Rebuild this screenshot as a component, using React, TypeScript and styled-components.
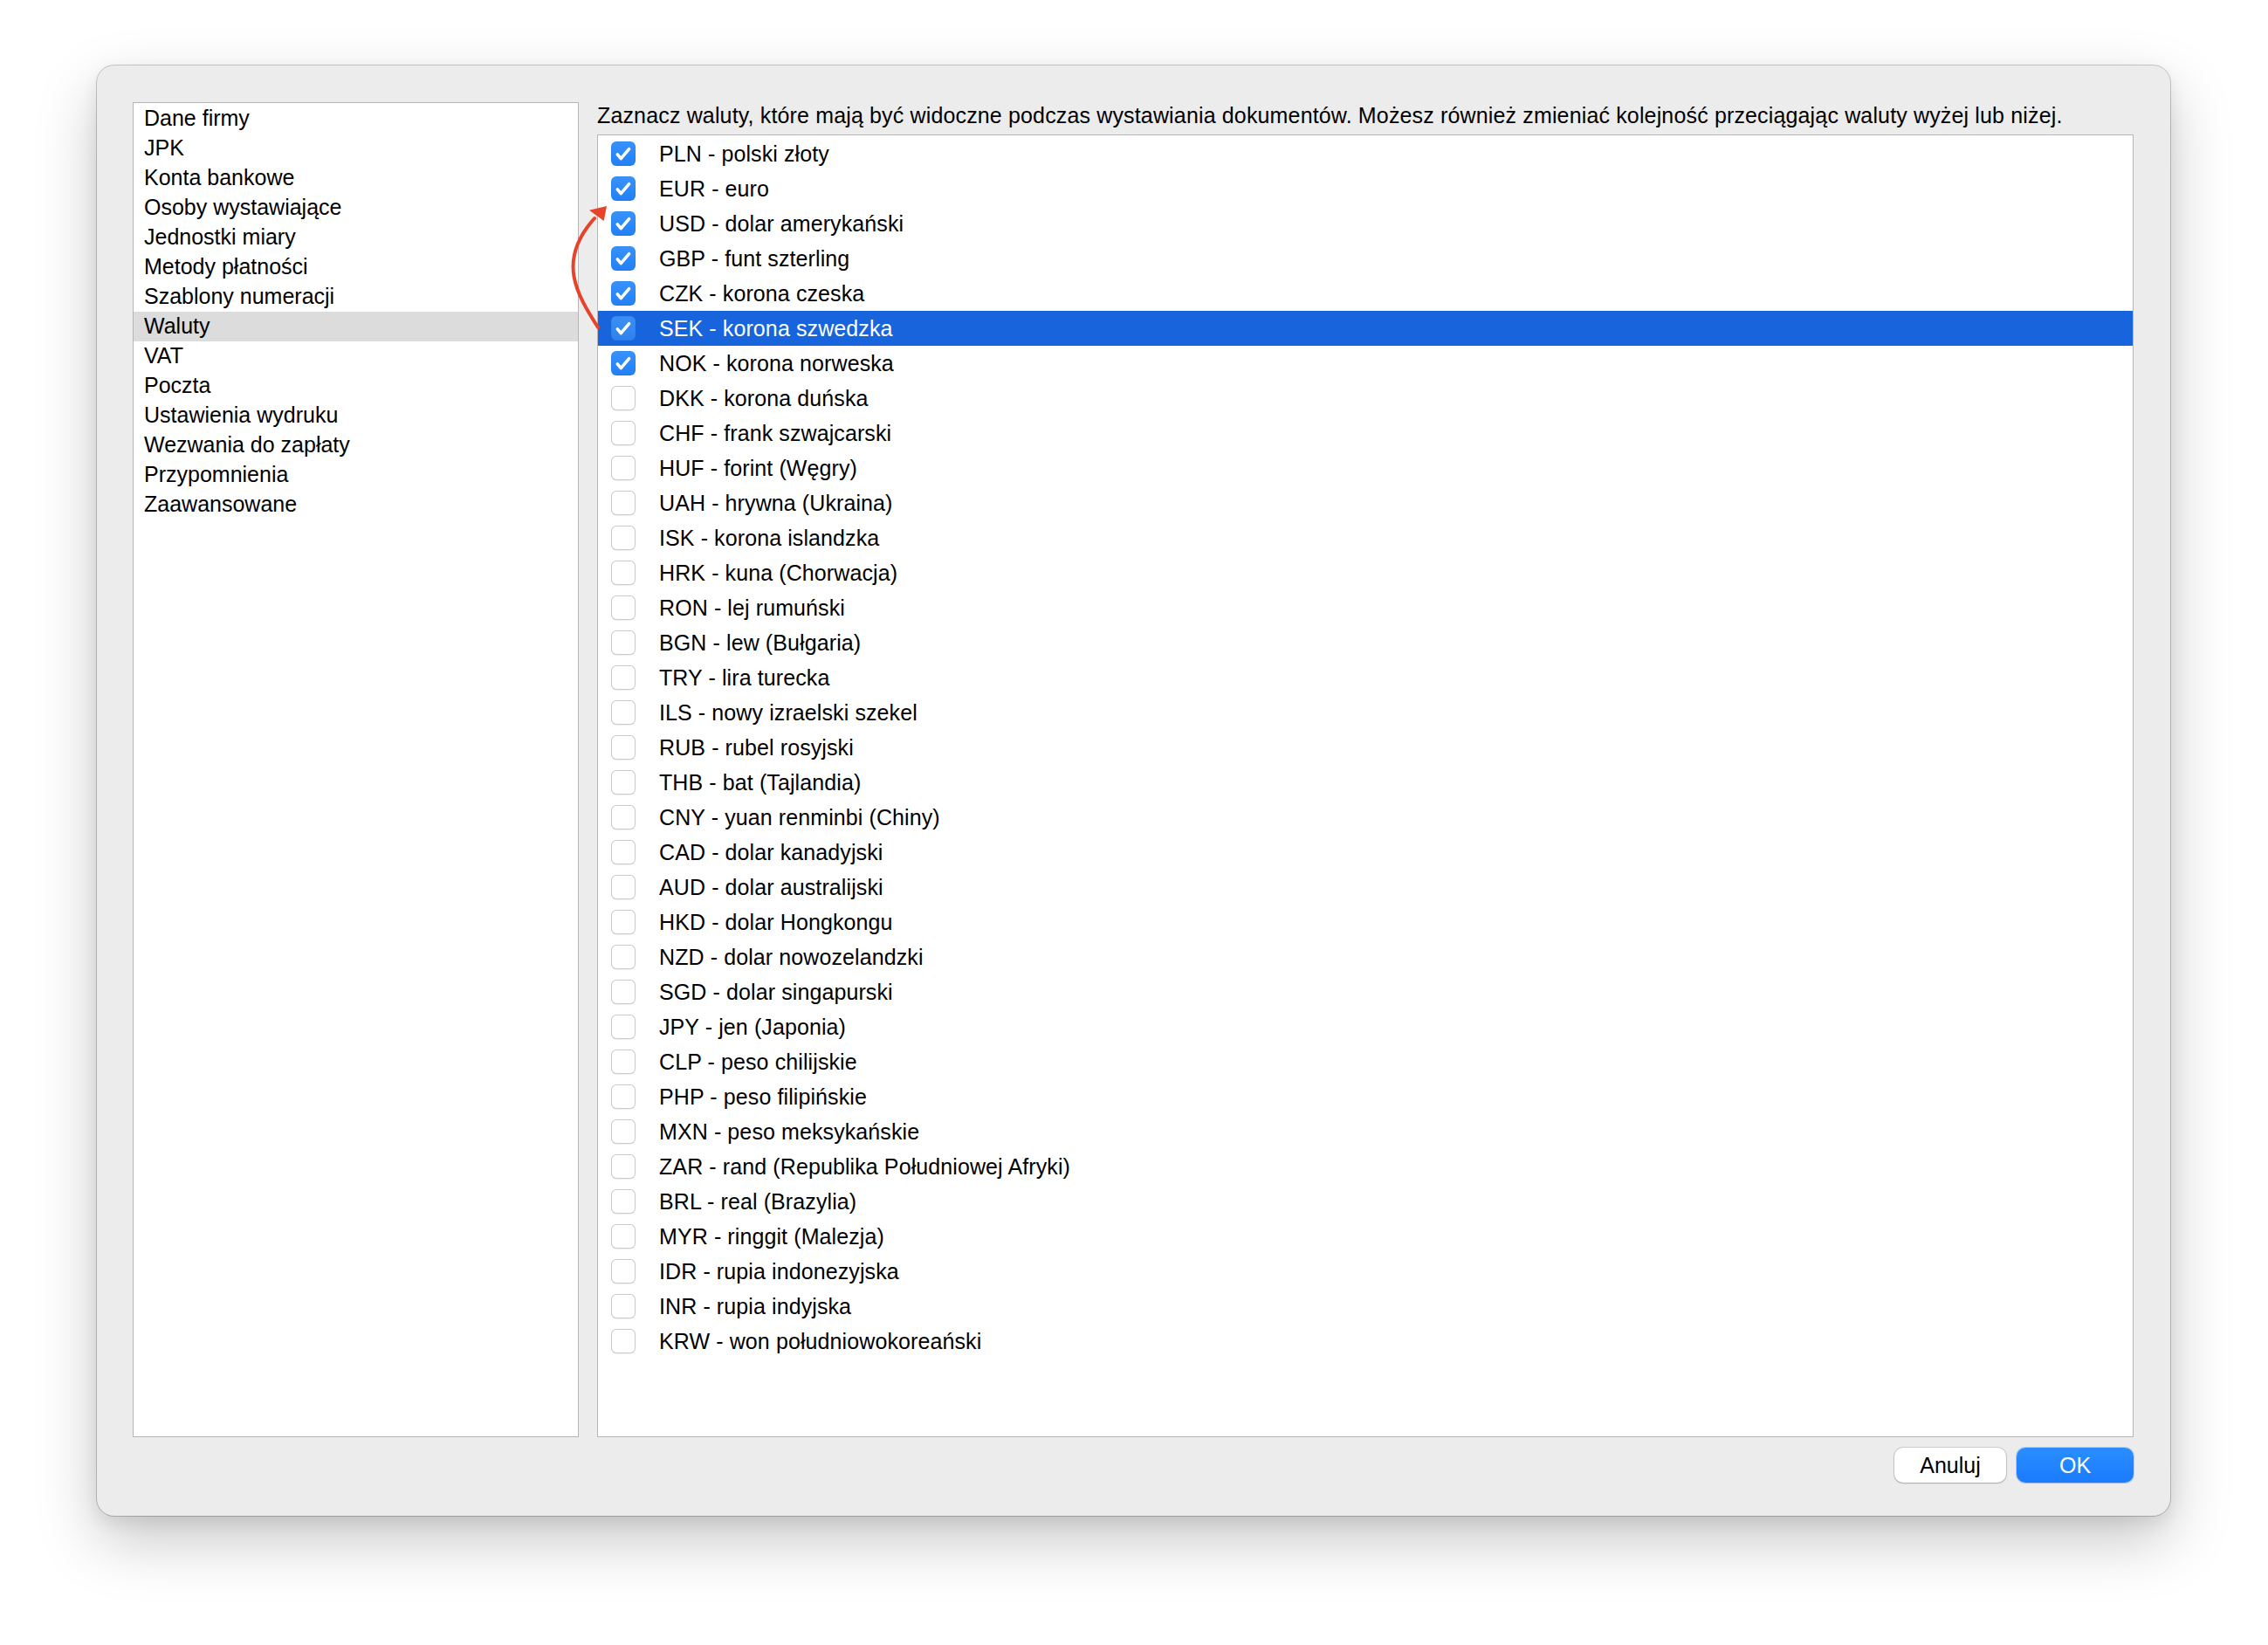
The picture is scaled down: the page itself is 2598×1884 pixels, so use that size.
import React from "react";
import styled, { createGlobalStyle } from "styled-components";

const GlobalStyle = createGlobalStyle`
  html, body {
    margin: 0;
    padding: 0;
    background: #ffffff;
  }
  body {
    font-family: "Liberation Sans", Arial, Helvetica, sans-serif;
    font-size: 25px;
    color: #000;
    -webkit-font-smoothing: antialiased;
  }
  * { box-sizing: border-box; }
`;

const Page = styled.div`
  padding: 75px 0 0 111px;
  width: 2598px;
  height: 1884px;
`;

const Window = styled.div`
  position: relative;
  width: 2375px;
  height: 1661px;
  background: #ececec;
  border-radius: 20px;
  box-shadow: 0 0 0 1px rgba(0, 0, 0, 0.2), 0 28px 70px rgba(0, 0, 0, 0.22),
    0 8px 20px rgba(0, 0, 0, 0.08);
  padding: 42px 42px 38px 41px;
  display: flex;
  flex-direction: column;
`;

const Content = styled.div`
  flex: 1;
  display: flex;
  gap: 21px;
  min-height: 0;
`;

const Sidebar = styled.div`
  width: 511px;
  flex: none;
  background: #fff;
  border: 1px solid #b5b5b5;
`;

const SideItem = styled.div<{ $active?: boolean }>`
  height: 34px;
  line-height: 33px;
  padding-left: 12px;
  font-size: 25px;
  color: #000;
  background: ${(p) => (p.$active ? "#dcdcdc" : "transparent")};
  white-space: nowrap;
  &:first-child {
    margin-top: 1px;
  }
`;

const Main = styled.div`
  flex: 1;
  display: flex;
  flex-direction: column;
  min-width: 0;
`;

const Hint = styled.div`
  line-height: 30px;
  font-size: 25px;
  letter-spacing: 0.15px;
  color: #000;
  margin-bottom: 7px;
  white-space: nowrap;
`;

const List = styled.div`
  flex: 1;
  background: #fff;
  border: 1px solid #b5b5b5;
  padding-top: 1px;
`;

const Row = styled.div<{ $selected?: boolean }>`
  height: 40px;
  display: flex;
  align-items: center;
  padding-left: 15px;
  gap: 27px;
  background: ${(p) => (p.$selected ? "#1764dc" : "transparent")};
  color: ${(p) => (p.$selected ? "#fff" : "#000")};
`;

const RowLabel = styled.span`
  font-size: 25px;
  line-height: 40px;
  letter-spacing: 0.1px;
  white-space: nowrap;
`;

const Box = styled.div<{ $checked?: boolean; $onSelected?: boolean }>`
  width: 28px;
  height: 28px;
  flex: none;
  border-radius: 6px;
  display: flex;
  align-items: center;
  justify-content: center;
  background: ${(p) =>
    p.$checked
      ? p.$onSelected
        ? "linear-gradient(#3a8ff5, #2f82ee)"
        : "linear-gradient(#3892fb, #2180f5)"
      : "#fff"};
  box-shadow: ${(p) =>
    p.$checked
      ? "inset 0 0 0 1px rgba(0,0,0,0.04)"
      : "inset 0 0 0 1px #c9c9c9, 0 1px 1px rgba(0,0,0,0.06)"};
`;

const Footer = styled.div`
  margin-top: 12px;
  display: flex;
  justify-content: flex-end;
  gap: 12px;
`;

const Button = styled.button<{ $primary?: boolean; $w: number }>`
  width: ${(p) => p.$w}px;
  height: 40px;
  border: none;
  border-radius: 10px;
  font-family: "Liberation Sans", Arial, Helvetica, sans-serif;
  font-size: 25px;
  padding: 0;
  color: ${(p) => (p.$primary ? "#fff" : "#000")};
  background: ${(p) =>
    p.$primary ? "linear-gradient(#2b8eff, #1a7bfd)" : "#fff"};
  box-shadow: ${(p) =>
    p.$primary
      ? "0 0 0 1px rgba(20,110,240,0.25), 0 1px 1px rgba(0,0,0,0.12)"
      : "0 0 0 1px rgba(0,0,0,0.12), 0 1px 2px rgba(0,0,0,0.18)"};
`;

const ArrowOverlay = styled.svg`
  position: absolute;
  left: 520px;
  top: 140px;
  width: 100px;
  height: 180px;
  overflow: visible;
  pointer-events: none;
`;

const sideItems = [
  "Dane firmy",
  "JPK",
  "Konta bankowe",
  "Osoby wystawiające",
  "Jednostki miary",
  "Metody płatności",
  "Szablony numeracji",
  "Waluty",
  "VAT",
  "Poczta",
  "Ustawienia wydruku",
  "Wezwania do zapłaty",
  "Przypomnienia",
  "Zaawansowane",
];

const currencies: [string, boolean][] = [
  ["PLN - polski złoty", true],
  ["EUR - euro", true],
  ["USD - dolar amerykański", true],
  ["GBP - funt szterling", true],
  ["CZK - korona czeska", true],
  ["SEK - korona szwedzka", true],
  ["NOK - korona norweska", true],
  ["DKK - korona duńska", false],
  ["CHF - frank szwajcarski", false],
  ["HUF - forint (Węgry)", false],
  ["UAH - hrywna (Ukraina)", false],
  ["ISK - korona islandzka", false],
  ["HRK - kuna (Chorwacja)", false],
  ["RON - lej rumuński", false],
  ["BGN - lew (Bułgaria)", false],
  ["TRY - lira turecka", false],
  ["ILS - nowy izraelski szekel", false],
  ["RUB - rubel rosyjski", false],
  ["THB - bat (Tajlandia)", false],
  ["CNY - yuan renminbi (Chiny)", false],
  ["CAD - dolar kanadyjski", false],
  ["AUD - dolar australijski", false],
  ["HKD - dolar Hongkongu", false],
  ["NZD - dolar nowozelandzki", false],
  ["SGD - dolar singapurski", false],
  ["JPY - jen (Japonia)", false],
  ["CLP - peso chilijskie", false],
  ["PHP - peso filipińskie", false],
  ["MXN - peso meksykańskie", false],
  ["ZAR - rand (Republika Południowej Afryki)", false],
  ["BRL - real (Brazylia)", false],
  ["MYR - ringgit (Malezja)", false],
  ["IDR - rupia indonezyjska", false],
  ["INR - rupia indyjska", false],
  ["KRW - won południowokoreański", false],
];

const Check = () => (
  <svg width="28" height="28" viewBox="0 0 28 28">
    <path
      d="M7.3 14.8 L11.3 19.6 L20.6 8.6"
      fill="none"
      stroke="#fff"
      strokeWidth="3.6"
      strokeLinecap="round"
      strokeLinejoin="round"
    />
  </svg>
);

export default function App() {
  const selected = 5;
  return (
    <>
      <GlobalStyle />
      <Page>
        <Window>
          <Content>
            <Sidebar>
              {sideItems.map((s) => (
                <SideItem key={s} $active={s === "Waluty"}>
                  {s}
                </SideItem>
              ))}
            </Sidebar>
            <Main>
              <Hint>
                Zaznacz waluty, które mają być widoczne podczas wystawiania
                dokumentów. Możesz również zmieniać kolejność przeciągając waluty
                wyżej lub niżej.
              </Hint>
              <List>
                {currencies.map(([label, checked], i) => (
                  <Row key={label} $selected={i === selected}>
                    <Box $checked={checked} $onSelected={i === selected}>
                      {checked && <Check />}
                    </Box>
                    <RowLabel>{label}</RowLabel>
                  </Row>
                ))}
              </List>
            </Main>
          </Content>
          <Footer>
            <Button $w={128}>Anuluj</Button>
            <Button $w={134} $primary>
              OK
            </Button>
          </Footer>
          <ArrowOverlay viewBox="0 0 100 180">
            <path
              d="M54 160 C 30 122, 6 84, 50 35"
              fill="none"
              stroke="#e8422a"
              strokeWidth="4"
              strokeLinecap="round"
            />
            <polygon points="64,21 44,25.7 60.7,38" fill="#e8422a" />
          </ArrowOverlay>
        </Window>
      </Page>
    </>
  );
}
